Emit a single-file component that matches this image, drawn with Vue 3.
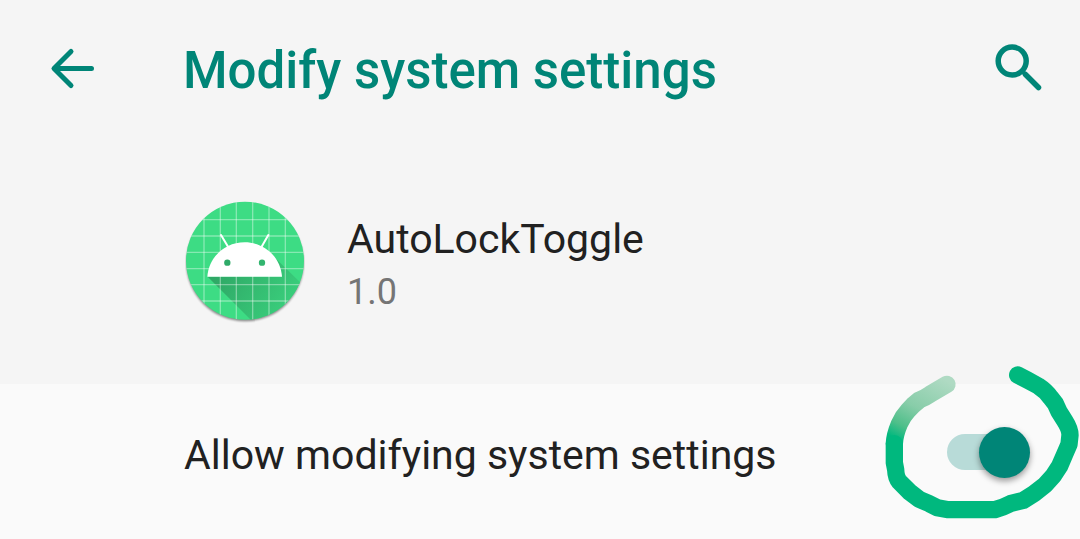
<script setup>
import { ref } from 'vue'

const allowed = ref(true)
const gridX = [87, 136, 184, 233, 282, 331]
const gridY = [89, 138, 187, 236, 284, 333]
</script>

<template>
  <main class="screen">
    <header class="bar">
      <button class="icon-button" type="button" aria-label="Back">
        <svg width="48" height="48" viewBox="0 0 48 48">
          <path d="M41.500 21.500H4.500M21 4.500L4 21.500L21 38.500" />
        </svg>
      </button>
      <h1 class="title">Modify system settings</h1>
      <button class="icon-button" type="button" aria-label="Search">
        <svg width="48" height="56" viewBox="0 0 48 56">
          <circle cx="18.200" cy="18" r="14" stroke-width="5.500" />
          <path d="M31.500 31.500L44.500 44.500" stroke-width="5.500" />
          <path d="M28.500 28.500L31.500 31.500" stroke-width="4" />
        </svg>
      </button>
    </header>

    <section class="app">
      <svg class="logo" width="120" height="124" viewBox="30 33 360 372" aria-hidden="true">
        <defs>
          <clipPath id="disc"><circle cx="210" cy="212" r="177" /></clipPath>
          <linearGradient id="cast" gradientUnits="userSpaceOnUse" x1="130" y1="250" x2="350" y2="400">
            <stop offset="0" stop-color="#2fa866" />
            <stop offset="1" stop-color="#3bd47f" />
          </linearGradient>
          <filter id="soft" x="-10%" y="-10%" width="120%" height="120%">
            <feGaussianBlur stdDeviation="3" />
          </filter>
        </defs>
        <circle cx="210" cy="218" r="176" fill="#000" opacity=".45" filter="url(#soft)" />
        <circle cx="210" cy="212" r="177" fill="#3ddc84" />
        <g clip-path="url(#disc)">
          <path d="M98 260L230 392H420V320L303 206L321 260Z" fill="url(#cast)" />
          <g stroke="#fff" stroke-opacity=".38" stroke-width="4">
            <line v-for="x in gridX" :key="'x' + x" :x1="x" :x2="x" y1="33" y2="392" />
            <line v-for="y in gridY" :key="'y' + y" :y1="y" :y2="y" x1="30" x2="390" />
          </g>
        </g>
        <path d="M138 135L160 172M280 135L259 172" stroke="#fff" stroke-width="6" stroke-linecap="round" />
        <path d="M97 260C101 202 149 157 209 157S317 202 321 260Z" fill="#fff" />
        <circle cx="157" cy="218" r="9.500" fill="#2faa68" />
        <circle cx="261" cy="218" r="9.500" fill="#32b56f" />
      </svg>
      <div class="about">
        <h2 class="name">AutoLockToggle</h2>
        <p class="version">1.0</p>
      </div>
    </section>

    <section class="row">
      <label class="label" for="allow">Allow modifying system settings</label>
      <span class="toggle">
        <input id="allow" v-model="allowed" class="switch" type="checkbox" role="switch" />
        <svg class="scribble" width="210" height="184" viewBox="0 0 630 552" aria-hidden="true">
          <defs>
            <linearGradient id="fade" gradientUnits="userSpaceOnUse" x1="235" y1="80" x2="130" y2="280">
              <stop offset="0" stop-color="#afdac3" />
              <stop offset=".5" stop-color="#88cda9" />
              <stop offset=".8" stop-color="#4fbf8a" />
              <stop offset="1" stop-color="#00b87e" />
            </linearGradient>
          </defs>
          <path
            d="M73 266C74 242 80 226 88 207Q98 184 114 167L130 150L148 135Q164 129 180 118L231 88"
            stroke="url(#fade)"
          />
          <path
            d="M443 60L472 75L505 93Q528 108 542 128L556 146L567 170L584 197Q600 222 600 240L597 268L584 298L569 333L550 362L525 390L492 416L460 436L423 445Q400 457 375 464H235L202 458L178 446L148 433L119 411L88 380Q78 368 77 344L73 323V266"
            stroke="#00b87e"
          />
        </svg>
      </span>
    </section>
  </main>
</template>

<style>
body {
  margin: 0;
  background: #fafafa;
}
</style>

<style scoped>
.screen {
  font-family: Roboto, "Noto Sans", sans-serif;
  color: #212121;
  overflow: hidden;
}
.bar {
  display: flex;
  align-items: center;
  padding: 37px 38px 35px 50px;
  background: #f5f5f5;
}
.icon-button {
  display: flex;
  padding: 0;
  border: 0;
  background: none;
}
.icon-button svg {
  fill: none;
  stroke: #008577;
  stroke-width: 5;
  stroke-linecap: round;
  stroke-linejoin: round;
}
.title {
  flex: 1;
  margin: 0 0 0 85px;
  font-size: 51px;
  line-height: 68px;
  font-weight: 500;
  color: #008577;
}
.app {
  display: flex;
  align-items: center;
  gap: 42px;
  padding: 61px 48px 59px 185px;
  background: #f5f5f5;
}
.logo {
  display: block;
}
.about {
  padding-top: 2px;
}
.name {
  margin: 0;
  font-size: 41px;
  line-height: 56px;
  font-weight: 400;
}
.version {
  margin: 0;
  font-size: 36px;
  line-height: 50px;
  color: #757575;
}
.row {
  display: flex;
  align-items: center;
  justify-content: space-between;
  padding: 42px 50px 61px 184px;
  background: #fafafa;
}
.label {
  padding-top: 6px;
  font-size: 41px;
  line-height: 46px;
}
.toggle {
  position: relative;
  display: flex;
}
.switch {
  appearance: none;
  position: relative;
  display: flex;
  align-items: center;
  width: 83px;
  height: 52px;
  margin: 0;
}
.switch::before {
  content: "";
  width: 76px;
  height: 36px;
  border-radius: 18px;
  background: #b8dbd8;
}
.switch::after {
  content: "";
  position: absolute;
  left: 0;
  bottom: 0;
  width: 51px;
  height: 51px;
  border-radius: 50%;
  background: #9e9e9e;
  box-shadow: 0 3px 6px rgba(0, 0, 0, 0.4);
}
.switch:checked::after {
  left: auto;
  right: 0;
  background: #008577;
}
.scribble {
  position: absolute;
  left: -77px;
  top: -71px;
  fill: none;
  stroke-width: 52;
  stroke-linecap: round;
  stroke-linejoin: round;
  pointer-events: none;
}
</style>
